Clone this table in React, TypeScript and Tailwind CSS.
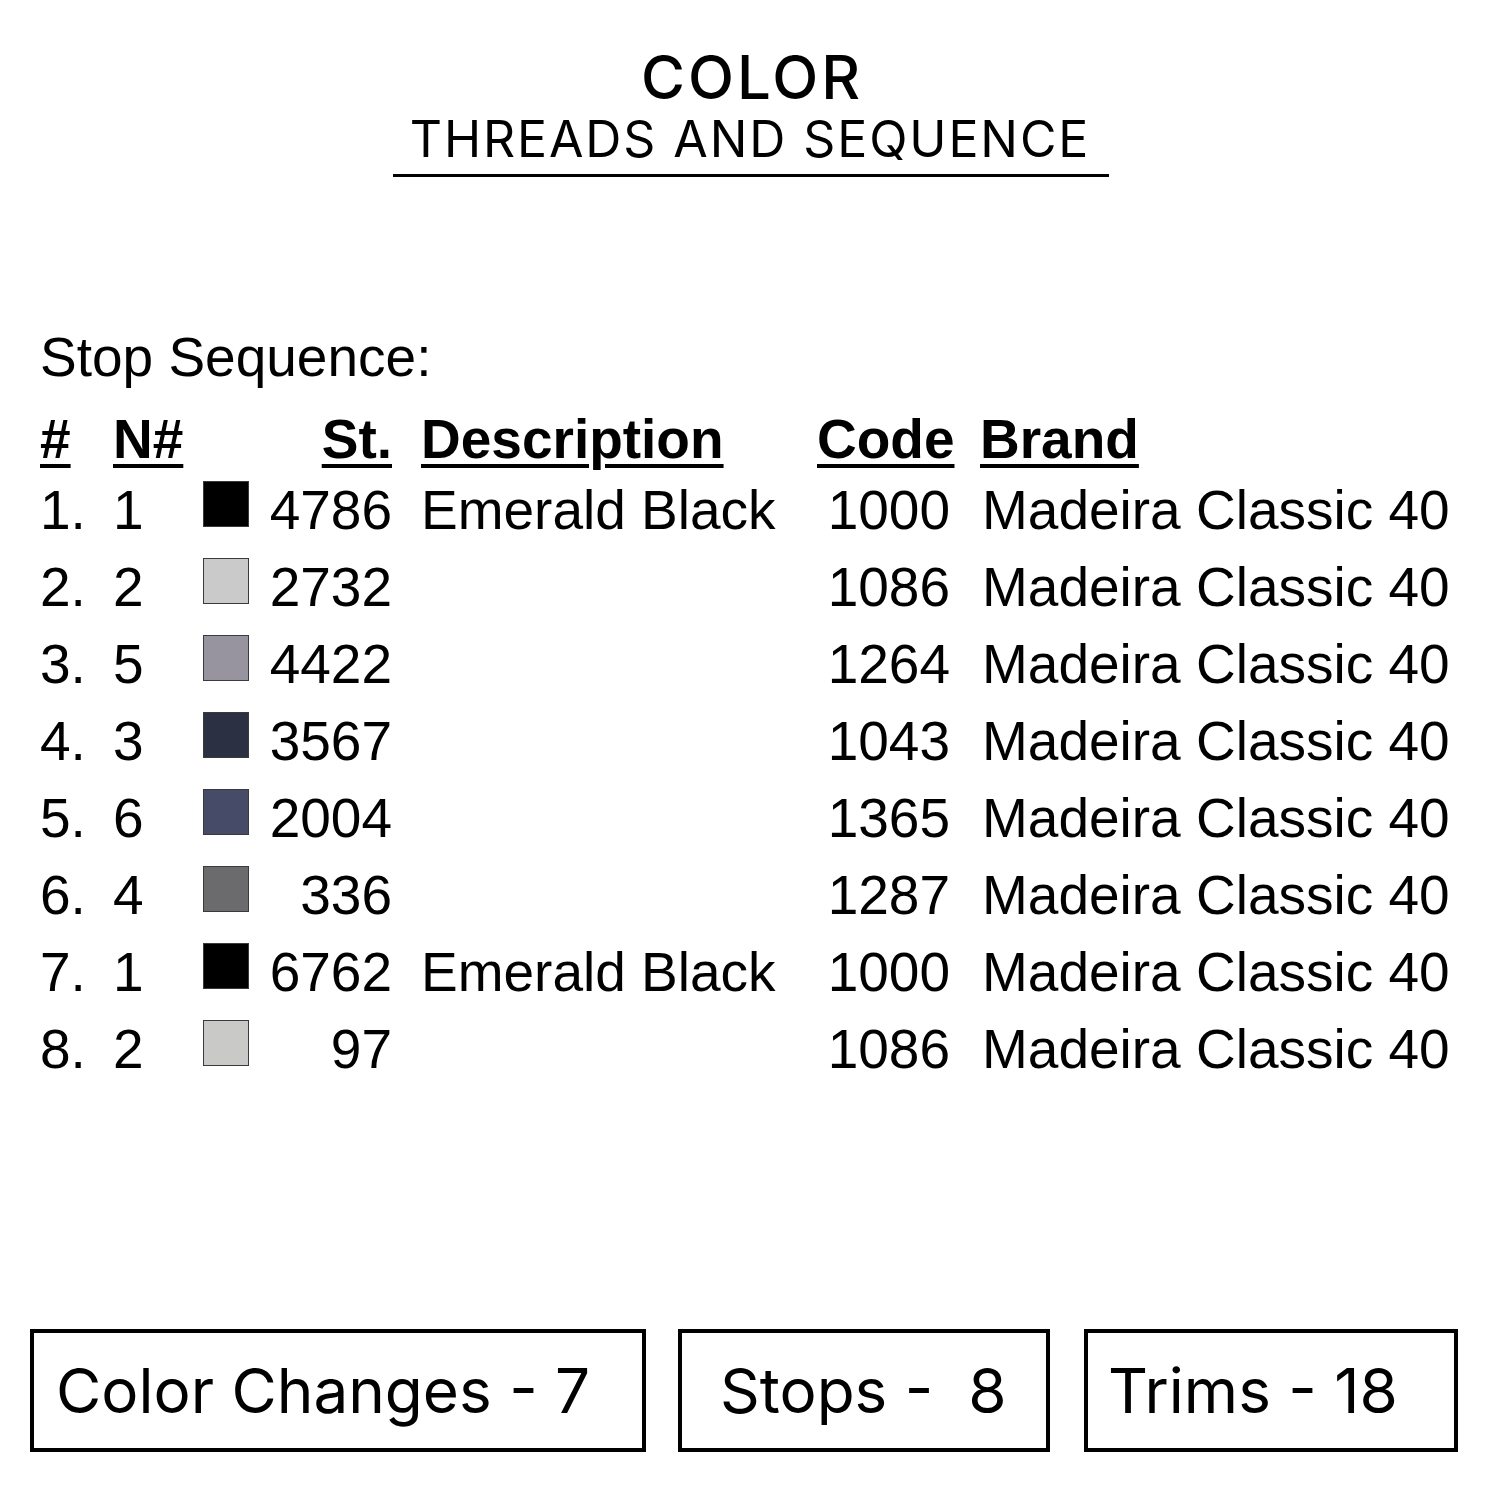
const rows = [
  { n: '1.', nn: '1', color: 'bg-[#000000]', st: '4786', desc: 'Emerald Black', code: '1000' },
  { n: '2.', nn: '2', color: 'bg-[#cacaca]', st: '2732', desc: '', code: '1086' },
  { n: '3.', nn: '5', color: 'bg-[#97949f]', st: '4422', desc: '', code: '1264' },
  { n: '4.', nn: '3', color: 'bg-[#2b3143]', st: '3567', desc: '', code: '1043' },
  { n: '5.', nn: '6', color: 'bg-[#464c68]', st: '2004', desc: '', code: '1365' },
  { n: '6.', nn: '4', color: 'bg-[#6b6a6d]', st: '336', desc: '', code: '1287' },
  { n: '7.', nn: '1', color: 'bg-[#000000]', st: '6762', desc: 'Emerald Black', code: '1000' },
  { n: '8.', nn: '2', color: 'bg-[#c9c9c7]', st: '97', desc: '', code: '1086' },
];

const cols = 'grid grid-cols-[73px_90px_46px_143px_425px_136px_1fr]';
const ul = 'underline decoration-[4px] underline-offset-[6px]';

const App = () => {
  return (
    <div className="h-[1500px] w-[1500px] bg-white text-black">
      <header className="flex flex-col items-center pt-[44px] font-['Inter',sans-serif]">
        <h1 className="pl-[4px] text-[60px] font-medium leading-[66px] tracking-[3px]">COLOR</h1>
        <p className="mt-[2px] text-[50px] font-normal leading-[54px] tracking-[1.9px]">THREADS AND SEQUENCE</p>
        <div className="mt-[8px] ml-[2px] h-[3px] w-[716px] bg-black" />
      </header>

      <section className="pl-[40px] pt-[142px] font-['Liberation_Sans',Arial,sans-serif] text-[55px]">
        <p className="leading-[77px]">Stop Sequence:</p>
        <div className={`${cols} mt-[5px] font-bold leading-[77px]`}>
          <span className={ul}>#</span>
          <span className={ul}>N#</span>
          <span />
          <span className={`text-right ${ul}`}>St.</span>
          <span className="pl-[29px]"><span className={ul}>Description</span></span>
          <span className={`text-right ${ul}`}>Code</span>
          <span className="pl-[27px]"><span className={ul}>Brand</span></span>
        </div>
        <div className="-mt-[6px]">
          {rows.map((r, i) => (
            <div key={i} className={`${cols} leading-[77px]`}>
              <span>{r.n}</span>
              <span>{r.nn}</span>
              <span className={`mt-[9px] h-[46px] w-[46px] self-start border border-[#3a3a3a] ${r.color}`} />
              <span className="text-right">{r.st}</span>
              <span className="pl-[29px]">{r.desc}</span>
              <span className="pr-[3px] text-right">{r.code}</span>
              <span className="pl-[29px]">Madeira Classic 40</span>
            </div>
          ))}
        </div>
      </section>

      <footer className="mt-[241px] flex gap-[32px] pl-[30px] font-['Inter',sans-serif] text-[62px] leading-none">
        <div className="flex h-[123px] w-[616px] items-center border-[4px] border-black pl-[22px]">Color Changes - 7</div>
        <div className="flex h-[123px] w-[372px] items-center whitespace-pre border-[4px] border-black pl-[38px]">Stops -  8</div>
        <div className="ml-[2px] flex h-[123px] w-[374px] items-center border-[4px] border-black pl-[20px]">Trims - 18</div>
      </footer>
    </div>
  );
};

export default App;
